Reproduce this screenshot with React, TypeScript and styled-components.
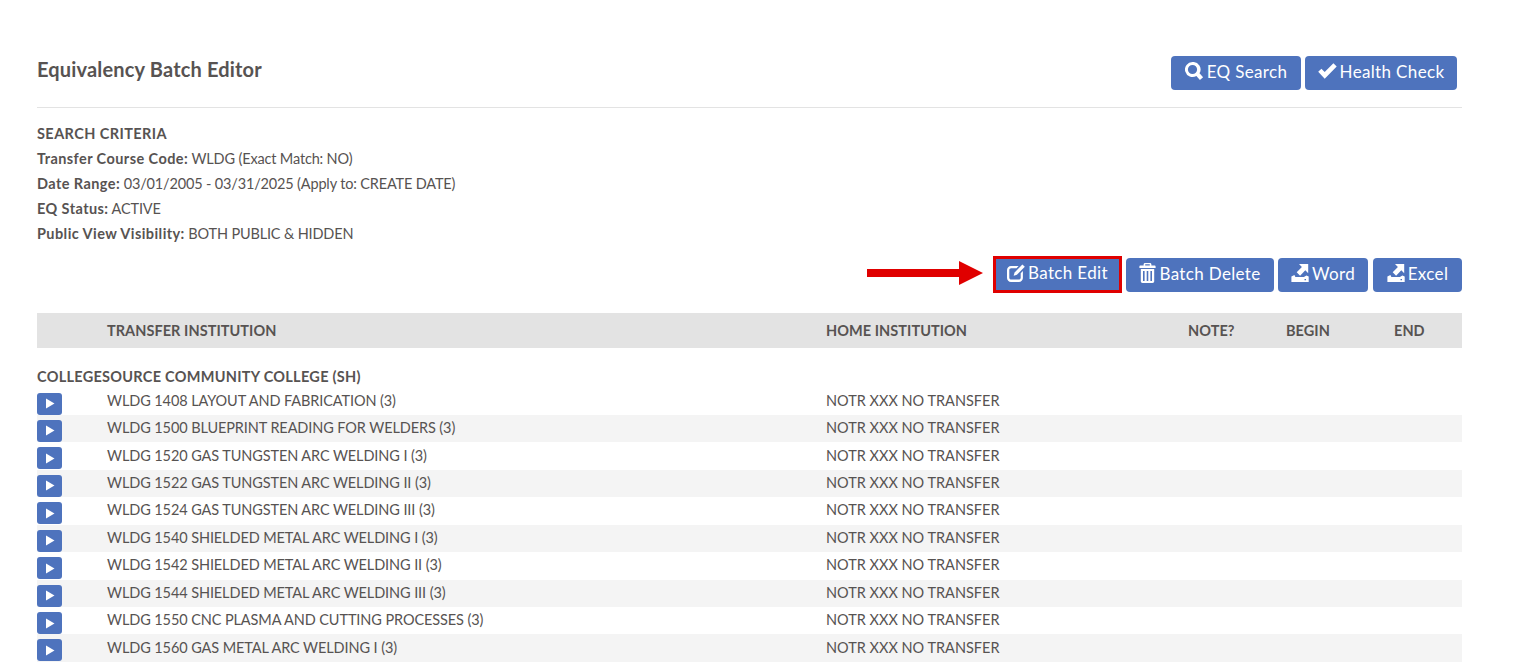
import React from "react";
import styled, { createGlobalStyle } from "styled-components";

const Global = createGlobalStyle`
  html, body { margin: 0; padding: 0; background: #fff; overflow: hidden; height: 665px; }
  * { box-sizing: border-box; }
  body { font-family: "Lato", "Open Sans", sans-serif; color: #575352; font-size: 14.5px; }
`;

const Page = styled.div`
  padding: 56px 68px 0 37px;
`;
const TitleBar = styled.header`
  display: flex;
  justify-content: space-between;
  align-items: flex-start;
  height: 52px;
  border-bottom: 1px solid #e3e3e3;
`;
const Title = styled.h1`
  margin: -1px 0 0;
  font-size: 20px;
  font-weight: 700;
  line-height: 28px;
  letter-spacing: 0.17px;
  color: #575352;
`;
const TitleActions = styled.div`
  display: flex;
  gap: 4px;
  padding-right: 5px;
`;
const Button = styled.button<{ $w: number; $outlined?: boolean; $ml?: number }>`
  display: inline-flex;
  align-items: center;
  justify-content: center;
  gap: 3px;
  width: ${(p) => p.$w}px;
  height: ${(p) => (p.$outlined ? 37 : 34)}px;
  margin-left: ${(p) => p.$ml ?? 0}px;
  padding: 0 0 4px;
  border: ${(p) => (p.$outlined ? "3px solid #e00000" : "0")};
  border-radius: ${(p) => (p.$outlined ? "0" : "4px")};
  background: #4e73bd;
  color: #fff;
  font-family: inherit;
  font-size: 17px;
  font-weight: 400;
  letter-spacing: 0.35px;
`;
const Criteria = styled.section`
  padding-top: 13px;
  font-size: 14.5px;
  line-height: 25px;
`;
const CriteriaLine = styled.div`
  height: 25px;
  white-space: nowrap;
  letter-spacing: -0.16px;
`;
const Strong = styled.b`
  font-weight: 700;
  letter-spacing: 0.42px;
`;
const ActionBar = styled.div`
  display: flex;
  justify-content: flex-end;
  align-items: flex-start;
  gap: 4px;
  height: 37px;
  margin-top: 10px;
  & > button:not(:first-of-type) {
    margin-top: 2px;
  }
`;
const Arrow = styled.svg`
  width: 116px;
  height: 24px;
  margin: 5px 6px 0 0;
  flex: none;
`;
const GridRow = styled.div`
  display: grid;
  grid-template-columns: 70px 719px 362px 98px 108px 68px;
  align-items: center;
`;
const TableHead = styled(GridRow)`
  height: 35px;
  margin-top: 20px;
  background: #e3e3e3;
  font-weight: 700;
  letter-spacing: 0.05px;
`;
const GroupTitle = styled.div`
  height: 39.5px;
  padding-top: 19px;
  font-weight: 700;
  line-height: 20px;
  letter-spacing: 0.28px;
  white-space: nowrap;
`;
const DataRow = styled(GridRow)<{ $striped: boolean }>`
  height: 27.45px;
  padding-bottom: 2px;
  grid-template-rows: 25.45px;
  background: ${(p) => (p.$striped ? "#f4f4f4" : "#fff")};
  white-space: nowrap;
`;
const Course = styled.span`
  letter-spacing: -0.1px;
`;
const PlayButton = styled.button`
  display: flex;
  align-items: center;
  justify-content: center;
  align-self: start;
  width: 25px;
  height: 22px;
  margin-top: 5px;
  padding: 0;
  border: 0;
  border-radius: 3px;
  background: #4e73bd;
`;
const Glyph = styled.svg`
  flex: none;
  fill: currentColor;
`;

const SearchIcon = () => (
  <Glyph width="19" height="18" viewBox="0 0 19 18">
    <path
      fillRule="evenodd"
      d="M7.5 0a7.5 7.5 0 1 0 3.9 13.9l3.5 4 3.2-2.6-3.6-4A7.5 7.5 0 0 0 7.5 0zm0 2.9a4.6 4.6 0 1 1 0 9.2 4.6 4.6 0 0 1 0-9.2z"
    />
  </Glyph>
);
const CheckIcon = () => (
  <Glyph width="19" height="16" viewBox="0 0 19 16">
    <path d="M0.2 8.8l3.2-3.1 3.3 3.4L15.4 0.2l3.3 3.2L6.7 15.8z" />
  </Glyph>
);
const EditIcon = () => (
  <Glyph width="18" height="18" viewBox="0 0 18 18">
    <path d="M4 2h7.6L9.5 4.2H4.2c-1 0-1.9.8-1.9 1.8v7.7c0 1 .9 1.9 1.9 1.9h7.6c1 0 1.9-.9 1.9-1.9V9.2l2.2-2.2v7c0 2.2-1.8 4-4 4H4c-2.2 0-4-1.8-4-4V6c0-2.2 1.8-4 4-4z" />
    <path d="M15.4 0.4l2.4 2.4-7.9 8-3.3 1 1-3.4z" />
  </Glyph>
);
const TrashIcon = () => (
  <Glyph width="17" height="20" viewBox="0 0 17 20">
    <path
      fillRule="evenodd"
      d="M6 0h5c.8 0 1.3.6 1.4 1.4V2.4h3.1c.7 0 1.1.5 1.1 1.1V5H.4V3.5c0-.6.4-1.1 1.1-1.1h3.1V1.4C4.7.6 5.2 0 6 0zm.2 1.2v1.2h4.6V1.2zM1.8 6h13.4v12.3c0 1-.7 1.7-1.7 1.7h-10c-1 0-1.7-.7-1.7-1.7zm2.2 2v10h1.6V8zm3.7 0v10h1.6V8zm3.7 0v10H13V8z"
    />
  </Glyph>
);
const ExportIcon = () => (
  <Glyph width="18" height="18" viewBox="0 0 18 18">
    <path d="M8 0h9.2v9.2l-2.9-2.9-5.2 5.4-3.4-3.4 5.2-5.4z" />
    <path
      fillRule="evenodd"
      d="M0.4 12.4l3-1.5 1 2.1h8.5l2.5-1.6 2.3 1V18H.4zM13.5 15v1.2h1.5V15z"
    />
  </Glyph>
);

const rows = [
  "WLDG 1408 LAYOUT AND FABRICATION (3)",
  "WLDG 1500 BLUEPRINT READING FOR WELDERS (3)",
  "WLDG 1520 GAS TUNGSTEN ARC WELDING I (3)",
  "WLDG 1522 GAS TUNGSTEN ARC WELDING II (3)",
  "WLDG 1524 GAS TUNGSTEN ARC WELDING III (3)",
  "WLDG 1540 SHIELDED METAL ARC WELDING I (3)",
  "WLDG 1542 SHIELDED METAL ARC WELDING II (3)",
  "WLDG 1544 SHIELDED METAL ARC WELDING III (3)",
  "WLDG 1550 CNC PLASMA AND CUTTING PROCESSES (3)",
  "WLDG 1560 GAS METAL ARC WELDING I (3)",
];

export default function App() {
  return (
    <Page>
      <Global />
      <TitleBar>
        <Title>Equivalency Batch Editor</Title>
        <TitleActions>
          <Button $w={130}><SearchIcon />EQ Search</Button>
          <Button $w={152}><CheckIcon />Health Check</Button>
        </TitleActions>
      </TitleBar>
      <Criteria>
        <CriteriaLine><Strong>SEARCH CRITERIA</Strong></CriteriaLine>
        <CriteriaLine><Strong>Transfer Course Code:</Strong> WLDG (Exact Match: NO)</CriteriaLine>
        <CriteriaLine><Strong>Date Range:</Strong> 03/01/2005 - 03/31/2025 (Apply to: CREATE DATE)</CriteriaLine>
        <CriteriaLine><Strong>EQ Status:</Strong> ACTIVE</CriteriaLine>
        <CriteriaLine><Strong>Public View Visibility:</Strong> BOTH PUBLIC &amp; HIDDEN</CriteriaLine>
      </Criteria>
      <ActionBar>
        <Arrow viewBox="0 0 116 24">
          <path d="M0 8H92V0L116 12 92 24V16H0z" fill="#e00000" />
        </Arrow>
        <Button $w={129} $outlined><EditIcon />Batch Edit</Button>
        <Button $w={148}><TrashIcon />Batch Delete</Button>
        <Button $w={90}><ExportIcon />Word</Button>
        <Button $w={89} $ml={1}><ExportIcon />Excel</Button>
      </ActionBar>
      <TableHead>
        <span />
        <span>TRANSFER INSTITUTION</span>
        <span>HOME INSTITUTION</span>
        <span>NOTE?</span>
        <span>BEGIN</span>
        <span>END</span>
      </TableHead>
      <GroupTitle>COLLEGESOURCE COMMUNITY COLLEGE (SH)</GroupTitle>
      {rows.map((r, i) => (
        <DataRow key={r} $striped={i % 2 === 1}>
          <PlayButton aria-label="expand">
            <svg width="10" height="11" viewBox="0 0 10 11"><path d="M1 0.5L9.5 5.5 1 10.5z" fill="#fff" /></svg>
          </PlayButton>
          <Course>{r}</Course>
          <span>NOTR XXX NO TRANSFER</span>
        </DataRow>
      ))}
    </Page>
  );
}
